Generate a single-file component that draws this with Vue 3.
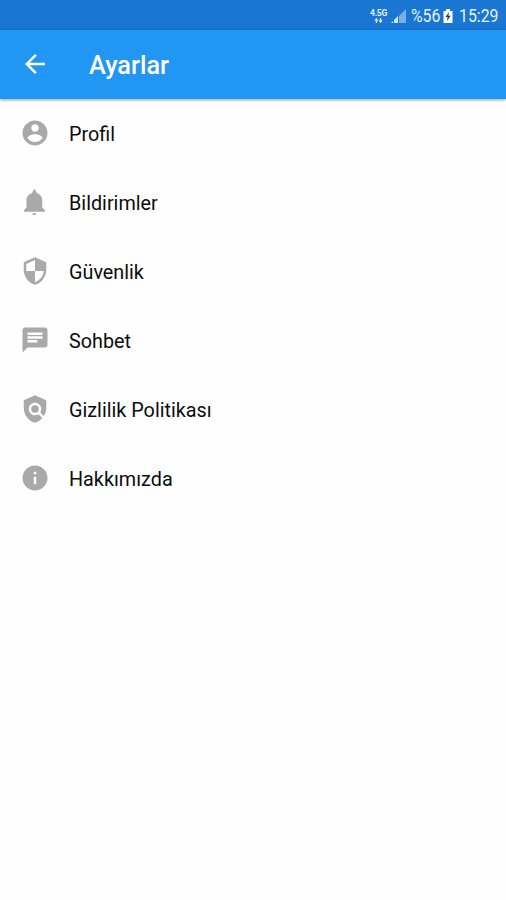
<script setup>
const items = [
  { label: 'Profil', icon: 'M12 2C6.48 2 2 6.48 2 12s4.48 10 10 10 10-4.48 10-10S17.52 2 12 2zm0 3c1.66 0 3 1.34 3 3s-1.34 3-3 3-3-1.34-3-3 1.34-3 3-3zm0 14.2c-2.5 0-4.71-1.28-6-3.22.03-1.99 4-3.08 6-3.08 1.99 0 5.97 1.09 6 3.08-1.29 1.94-3.5 3.22-6 3.22z' },
  { label: 'Bildirimler', icon: 'M11.5 22.5c.9 0 1.6-.7 1.6-1.6H9.9c0 .9.7 1.6 1.6 1.6zm6.3-6.2v-5.6c0-2.9-1.8-5.2-4.5-5.9-.2-1.3-.8-2.1-1.8-3-1 .9-1.6 1.7-1.8 3-2.7.7-4.5 3-4.5 5.9v5.6l-2.1 2.3v1.1h16.8v-1.1l-2.1-2.3z' },
  { label: 'Güvenlik', icon: 'M12 1L3 5v6c0 5.55 3.84 10.74 9 12 5.16-1.26 9-6.45 9-12V5l-9-4zm0 10.99h7c-.53 4.12-3.28 7.79-7 8.94V12H5V6.3l7-3.11v8.8z' },
  { label: 'Sohbet', icon: 'M20 2H4c-1.1 0-1.99.9-1.99 2L2 22l4-4h14c1.1 0 2-.9 2-2V4c0-1.1-.9-2-2-2zM6 9h12v2H6V9zm8 5H6v-2h8v2zm4-6H6V6h12v2z' },
  { label: 'Gizlilik Politikası', icon: 'M21 5l-9-4-9 4v6c0 5.55 3.84 10.74 9 12 2.3-.56 4.33-1.9 5.88-3.71l-3.12-3.12c-1.94 1.29-4.58 1.07-6.29-.64-1.95-1.95-1.95-5.12 0-7.07 1.95-1.95 5.12-1.95 7.07 0 1.71 1.71 1.92 4.35.64 6.29l2.9 2.9C20.29 15.69 21 13.38 21 11V5zM12 9a3 3 0 1 0 0 6a3 3 0 1 0 0-6z' },
  { label: 'Hakkımızda', icon: 'M12 2C6.48 2 2 6.48 2 12s4.48 10 10 10 10-4.48 10-10S17.52 2 12 2zm1 15h-2v-6h2v6zm0-8h-2V7h2v2z' }
]
</script>

<template>
  <div class="screen">
    <div class="status">
      <div class="network">
        <span class="gen">4.5G</span>
        <svg class="arrows" viewBox="0 0 10 6"><path d="M2.5 0L5 3H3.3V6H1.7V3H0zM7.5 6L5 3h1.7V0h1.6v3H10z" /></svg>
      </div>
      <svg class="signal" viewBox="0 0 16 15">
        <path d="M15 0v14H8V7z" fill="#fff" opacity=".42" />
        <path d="M0 14l2-2v2zM3 14v-3l4-4v7z" fill="#fff" opacity=".8" />
      </svg>
      <span class="percent">%56</span>
      <svg class="battery" viewBox="0 0 10 14">
        <path d="M3 0h4v2h2.5v12h-9V2H3z" fill="#fff" />
        <path d="M6 3L2.5 8h2L4 12l3.7-5.2H5.4z" fill="#12416f" />
      </svg>
      <span class="time">15:29</span>
    </div>
    <header class="bar">
      <svg class="back" viewBox="0 0 24 24"><path d="M20 11H7.83l5.59-5.59L12 4l-8 8 8 8 1.41-1.41L7.83 13H20v-2z" /></svg>
      <h1>Ayarlar</h1>
    </header>
    <ul class="list">
      <li v-for="item in items" :key="item.label">
        <svg viewBox="0 0 24 24"><path :d="item.icon" /></svg>
        <span>{{ item.label }}</span>
      </li>
    </ul>
  </div>
</template>

<style>
body { background: #fefefe; }
</style>

<style scoped>
.screen {
  height: 900px;
  overflow: hidden;
  background: #fefefe;
  font-family: Roboto, sans-serif;
}
.status {
  box-sizing: border-box;
  height: 30px;
  padding: 2px 8px 0 0;
  display: flex;
  align-items: center;
  justify-content: flex-end;
  background: #1976d2;
  color: #e8f2fc;
}
.network {
  width: 17px;
  display: flex;
  flex-direction: column;
  align-items: center;
  margin-right: 4px;
}
.gen { font-size: 8.5px; line-height: 8px; font-weight: 700; letter-spacing: -.3px; }
.arrows { width: 9px; height: 5px; margin-top: 1px; fill: #e8f2fc; }
.signal { width: 16px; height: 15px; margin: 0 4px 0 0; }
.percent, .time {
  display: block;
  line-height: 28px;
  font-size: 18px;
  white-space: nowrap;
  transform: scaleX(.88);
  transform-origin: left center;
}
.percent { width: 29px; }
.battery { width: 10px; height: 14px; margin: 0 6px 0 3px; }
.time { width: 39px; }
.bar {
  height: 69px;
  display: flex;
  align-items: center;
  background: #2196f3;
  box-shadow: 0 1px 3px rgba(0, 0, 0, .4);
}
.back { width: 30px; height: 30px; margin: 0 39px 1px 20px; fill: #fff; }
h1 { margin: 3px 0 0; font-size: 25.3px; line-height: 30px; font-weight: 500; color: #fff; }
.list { margin: -1px 0 0; padding: 0; list-style: none; }
li { height: 69px; display: flex; align-items: center; color: #0c0c0c; font-size: 19.8px; }
li svg { width: 30px; height: 30px; margin: 0 19px 0 20px; fill: #a9a9a9; }
li span { padding-top: 4px; line-height: 24px; }
</style>
